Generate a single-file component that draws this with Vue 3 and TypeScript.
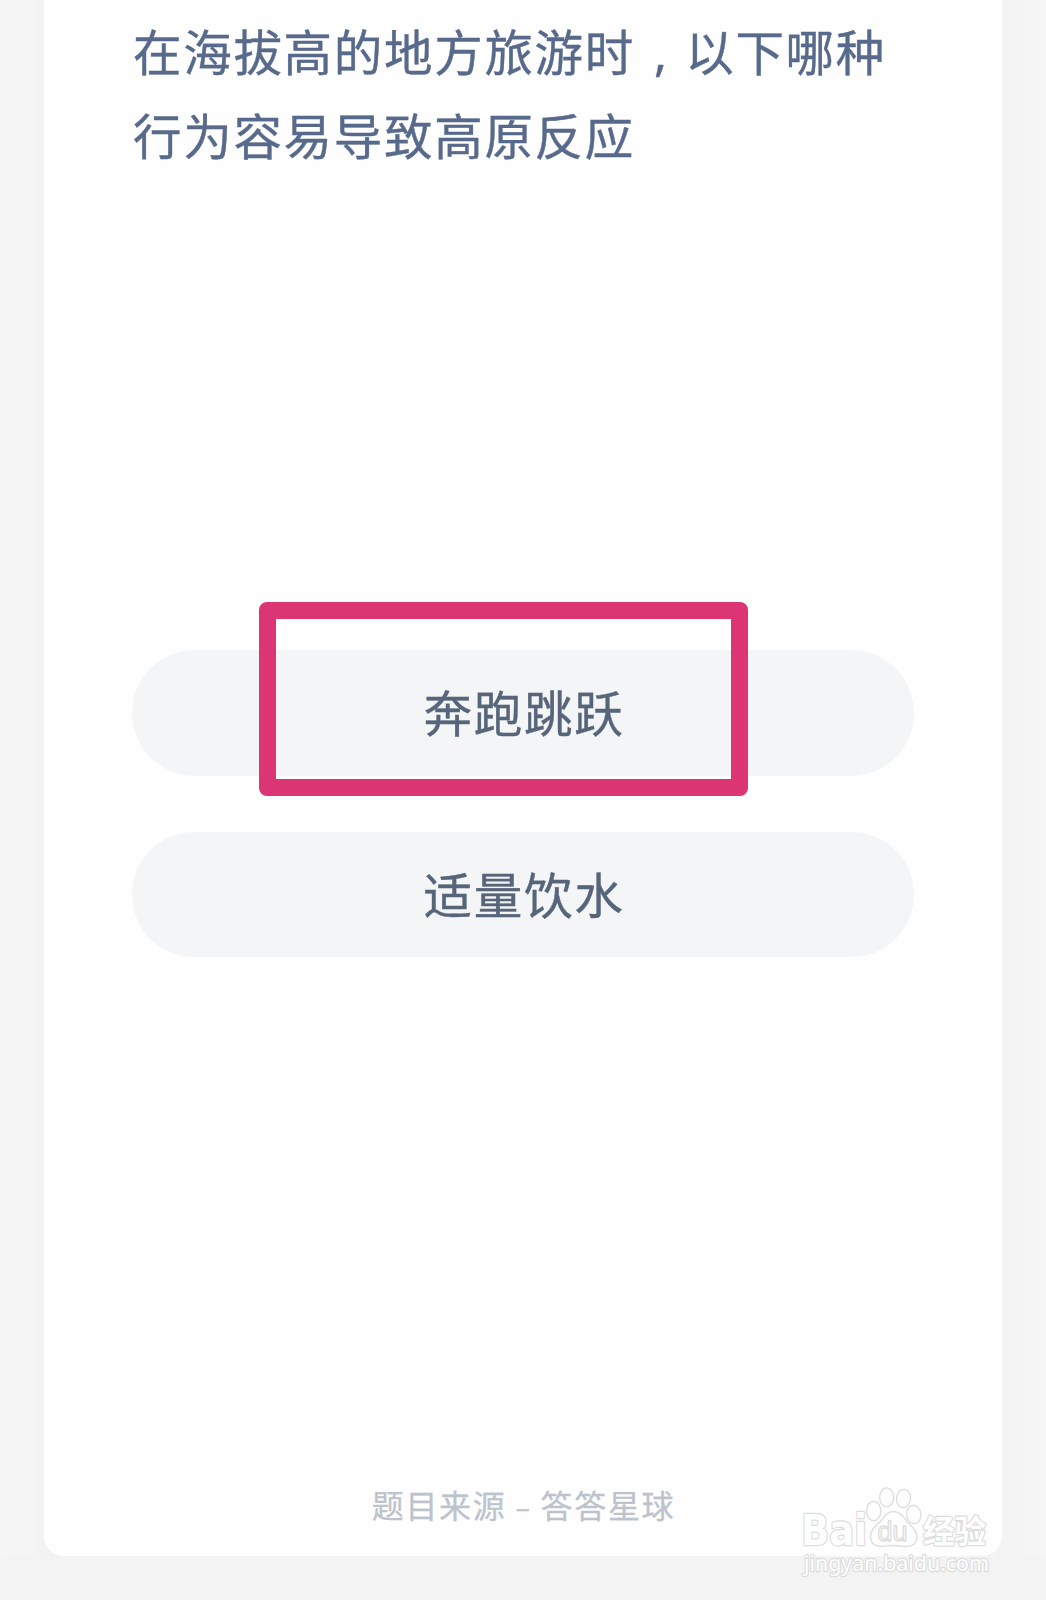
<script setup lang="ts">
interface Answer {
  text: string
  marked: boolean
}

const answers: Answer[] = [
  { text: '奔跑跳跃', marked: true },
  { text: '适量饮水', marked: false },
]
</script>

<template>
  <div class="page">
    <main class="card">
      <h1 class="question">
        <div>在海拔高的地方旅游时<span class="comma">,</span>以下哪种</div>
        <div>行为容易导致高原反应</div>
      </h1>
      <div class="answers">
        <button v-for="a in answers" :key="a.text" class="answer">
          {{ a.text }}
          <span v-if="a.marked" class="marker"></span>
        </button>
      </div>
      <footer class="source">题目来源<span class="dash">–</span>答答星球</footer>
    </main>
    <svg class="watermark" width="200" height="120" viewBox="0 0 200 120">
      <g class="outline">
        <text x="1" y="75.300" class="bai" textLength="66" lengthAdjust="spacingAndGlyphs">Bai</text>
        <ellipse cx="73.700" cy="41" rx="7.200" ry="9.600" />
        <ellipse cx="86.700" cy="27.400" rx="7" ry="9.500" />
        <ellipse cx="103.500" cy="28.500" rx="7" ry="9.200" transform="rotate(8 103.5 28.5)" />
        <ellipse cx="113.800" cy="44.500" rx="7.200" ry="9.200" transform="rotate(-5 113.8 44.5)" />
        <path d="M93.500 41.500C87 41.500 84 47 80.500 51.500C76 56 70.500 59 70.500 67C70.500 73 75 76.500 81 76.500C86 76.500 89 75.500 93.500 75.500C98 75.500 102 76.500 107 76.500C113 76.500 117 72.500 117 67C117 60 111 56 107 51.500C103 46.500 100 41.500 93.500 41.500Z" />
        <text x="77.500" y="71" class="du" textLength="30" lengthAdjust="spacingAndGlyphs">du</text>
        <text x="123" y="72.500" class="cn" textLength="63" lengthAdjust="spacingAndGlyphs">经验</text>
        <text x="4" y="100.500" class="url" textLength="185" lengthAdjust="spacingAndGlyphs">jingyan.baidu.com</text>
      </g>
    </svg>
  </div>
</template>

<style>
body {
  margin: 0;
  background: #f4f4f4;
}
</style>

<style scoped>
.page {
  position: relative;
  box-sizing: border-box;
  width: 1046px;
  height: 1600px;
  padding: 0 44px;
  overflow: hidden;
  background:
    linear-gradient(#f3f3f3, #f4f4f4) 0 1556px / 100% 44px no-repeat,
    linear-gradient(90deg, #f6f6f6 0, #f4f4f4 16px, #f5f5f5 32px, #f2f2f2 44px, #f3f3f3 1002px, #f4f4f4 1022px, #f6f6f6 1046px);
  font-family: "Noto Sans CJK SC", sans-serif;
}
.card {
  box-sizing: border-box;
  display: flex;
  flex-direction: column;
  height: 1556px;
  padding: 8px 88px 0;
  border-radius: 0 0 20px 20px;
  background: #fefefe;
}
.question {
  height: 168px;
  margin: 0;
  padding-left: 1px;
  font-size: 48.500px;
  font-weight: 400;
  line-height: 84px;
  letter-spacing: 1.700px;
  color: #586a8c;
  -webkit-text-stroke: 0.400px #586a8c;
  white-space: nowrap;
}
.comma {
  display: inline-block;
  width: 50.200px;
  text-indent: 19px;
  line-height: 1;
  font-family: "Noto Sans", "Noto Sans CJK SC", sans-serif;
}
.answers {
  display: flex;
  flex-direction: column;
  gap: 56px;
  margin-top: 474px;
}
.answer {
  position: relative;
  width: 782px;
  height: 125.500px;
  padding: 0 0 3px 2px;
  border: 0;
  border-radius: 63px;
  background: #f3f5f7;
  color: #566579;
  -webkit-text-stroke: 0.400px #566579;
  font-family: inherit;
  font-size: 48.500px;
  line-height: 122px;
  letter-spacing: 1.700px;
  text-align: center;
}
.marker {
  position: absolute;
  left: 126.500px;
  top: -48px;
  box-sizing: border-box;
  width: 489px;
  height: 194px;
  border: 17px solid #dc3573;
  border-radius: 8px;
}
.source {
  margin-top: auto;
  margin-bottom: 28px;
  padding-left: 1px;
  font-size: 32px;
  line-height: 48px;
  letter-spacing: 1.700px;
  text-align: center;
  color: #bdc3cd;
  -webkit-text-stroke: 0.300px #bdc3cd;
}
.dash {
  display: inline-block;
  width: 34px;
  font-size: 27px;
  line-height: 1;
}
.watermark {
  position: absolute;
  left: 800px;
  top: 1470px;
}
.outline {
  fill: #fefefe;
  stroke: #dcdcdc;
  stroke-width: 1.300;
  stroke-linejoin: round;
}
.bai {
  font: 700 42px "DejaVu Sans", sans-serif;
}
.du {
  font: 400 27px "Liberation Sans", sans-serif;
}
.cn {
  font: 700 32px "Noto Sans CJK SC", sans-serif;
}
.url {
  font: 400 22.500px "Noto Sans", sans-serif;
}
.cn,
.url,
.bai {
  paint-order: stroke;
  stroke-width: 2.400;
}
</style>
